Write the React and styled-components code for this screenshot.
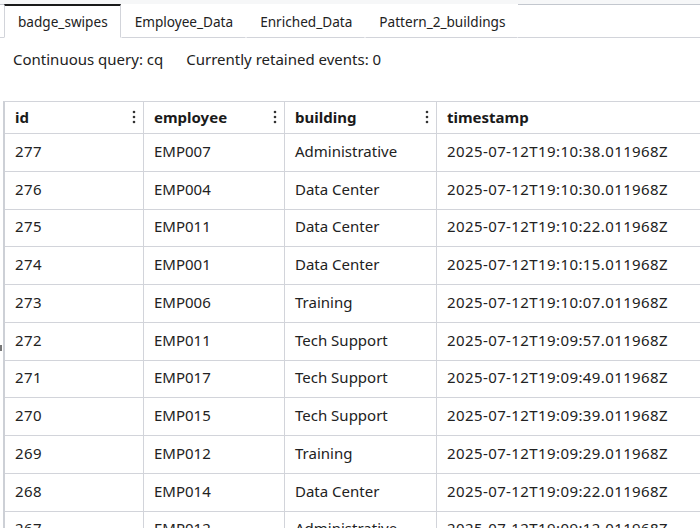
import React from "react";
import styled, { createGlobalStyle } from "styled-components";

const GlobalStyle = createGlobalStyle`
  html, body {
    margin: 0;
    padding: 0;
    background: #ffffff;
    overflow: hidden;
  }
  body {
    font-family: "Noto Sans", "Open Sans", sans-serif;
    color: #1f1f1f;
  }
`;

const tabs = ["badge_swipes", "Employee_Data", "Enriched_Data", "Pattern_2_buildings"];

const columns = [
  { key: "id", label: "id", width: 139, menu: true, numeric: true },
  { key: "employee", label: "employee", width: 141, menu: true },
  { key: "building", label: "building", width: 152, menu: true },
  { key: "timestamp", label: "timestamp", width: 300, menu: false, numeric: true },
];

const rows = [
  [277, "EMP007", "Administrative", "2025-07-12T19:10:38.011968Z"],
  [276, "EMP004", "Data Center", "2025-07-12T19:10:30.011968Z"],
  [275, "EMP011", "Data Center", "2025-07-12T19:10:22.011968Z"],
  [274, "EMP001", "Data Center", "2025-07-12T19:10:15.011968Z"],
  [273, "EMP006", "Training", "2025-07-12T19:10:07.011968Z"],
  [272, "EMP011", "Tech Support", "2025-07-12T19:09:57.011968Z"],
  [271, "EMP017", "Tech Support", "2025-07-12T19:09:49.011968Z"],
  [270, "EMP015", "Tech Support", "2025-07-12T19:09:39.011968Z"],
  [269, "EMP012", "Training", "2025-07-12T19:09:29.011968Z"],
  [268, "EMP014", "Data Center", "2025-07-12T19:09:22.011968Z"],
  [267, "EMP012", "Administrative", "2025-07-12T19:09:12.011968Z"],
];

function Kebab() {
  return (
    <svg width="4" height="14" viewBox="0 0 4 14">
      <circle cx="2" cy="2" r="1.3" fill="#333" />
      <circle cx="2" cy="7" r="1.3" fill="#333" />
      <circle cx="2" cy="12" r="1.3" fill="#333" />
    </svg>
  );
}

export default function App() {
  return (
    <Page>
      <GlobalStyle />
      <TopStrip />
      <TabBar>
        <Gutter />
        {tabs.map((t, i) => (
          <Tab key={t} active={i === 0}>
            {t}
          </Tab>
        ))}
        <TabFill />
      </TabBar>
      <Info>
        <span>Continuous query: cq</span>
        <span>Currently retained events: 0</span>
      </Info>
      <GridWrap>
        <Handle />
        <Table>
          <HeaderRow>
            {columns.map((c) => (
              <HeadCell key={c.key} width={c.width}>
                <span>{c.label}</span>
                {c.menu && <Kebab />}
              </HeadCell>
            ))}
          </HeaderRow>
          {rows.map((r) => (
            <Row key={r[0]}>
              {r.map((v, j) => (
                <Cell key={j} width={columns[j].width} numeric={columns[j].numeric}>
                  {v}
                </Cell>
              ))}
            </Row>
          ))}
        </Table>
      </GridWrap>
    </Page>
  );
}

const Page = styled.div`
  width: 700px;
  height: 528px;
  overflow: hidden;
  display: flex;
  flex-direction: column;
`;

const TopStrip = styled.div`
  height: 4px;
  background: #f6f7f8;
  border-bottom: 1px solid #c3c7ce;
  flex-shrink: 0;
`;

const TabBar = styled.div`
  display: flex;
  height: 34px;
  flex-shrink: 0;
  margin-top: -1px;
`;

const Gutter = styled.div`
  width: 4px;
  border-bottom: 1px solid #d2d4da;
`;

const Tab = styled.div`
  display: flex;
  align-items: center;
  padding: 0 12px 0 13px;
  font-size: 13.6px;
  color: #222;
  background: #fff;
  border-top: 2px solid ${(p) => (p.active ? "#1a1a1a" : "transparent")};
  border-left: 1px solid ${(p) => (p.active ? "#d2d4da" : "transparent")};
  border-right: 1px solid ${(p) => (p.active ? "#d2d4da" : "transparent")};
  border-bottom: 1px solid ${(p) => (p.active ? "transparent" : "#d2d4da")};
  box-sizing: border-box;
`;

const TabFill = styled.div`
  flex: 1;
  border-bottom: 1px solid #d2d4da;
`;

const Info = styled.div`
  display: flex;
  gap: 23px;
  padding: 11px 13px 0;
  height: 63px;
  box-sizing: border-box;
  font-size: 15px;
  color: #222;
  flex-shrink: 0;
`;

const GridWrap = styled.div`
  position: relative;
  flex: 1;
  padding-left: 3px;
`;

const Handle = styled.div`
  position: absolute;
  left: 0;
  top: 244px;
  width: 2px;
  height: 6px;
  background: #777;
`;

const Table = styled.div`
  border-left: 2px solid #cdd0d6;
  border-top: 1px solid #d2d4da;
`;

const HeaderRow = styled.div`
  display: flex;
  height: 32px;
  border-bottom: 1px solid #d2d4da;
  box-sizing: border-box;
`;

const HeadCell = styled.div`
  width: ${(p) => p.width}px;
  flex-shrink: 0;
  display: flex;
  align-items: center;
  justify-content: space-between;
  padding: 0 7px 1px 10px;
  box-sizing: border-box;
  border-right: 1px solid #d2d4da;
  font-size: 15px;
  font-weight: 700;
  color: #1a1a1a;
`;

const Row = styled.div`
  display: flex;
  height: 37.75px;
  border-bottom: 1px solid #d2d4da;
  box-sizing: border-box;
`;

const Cell = styled.div`
  width: ${(p) => p.width}px;
  flex-shrink: 0;
  display: flex;
  align-items: center;
  padding: 0 10px 3px;
  box-sizing: border-box;
  border-right: 1px solid #d2d4da;
  font-size: 15px;
  letter-spacing: ${(p) => (p.numeric ? "0.4px" : "0")};
  color: #222;
  white-space: nowrap;
`;
